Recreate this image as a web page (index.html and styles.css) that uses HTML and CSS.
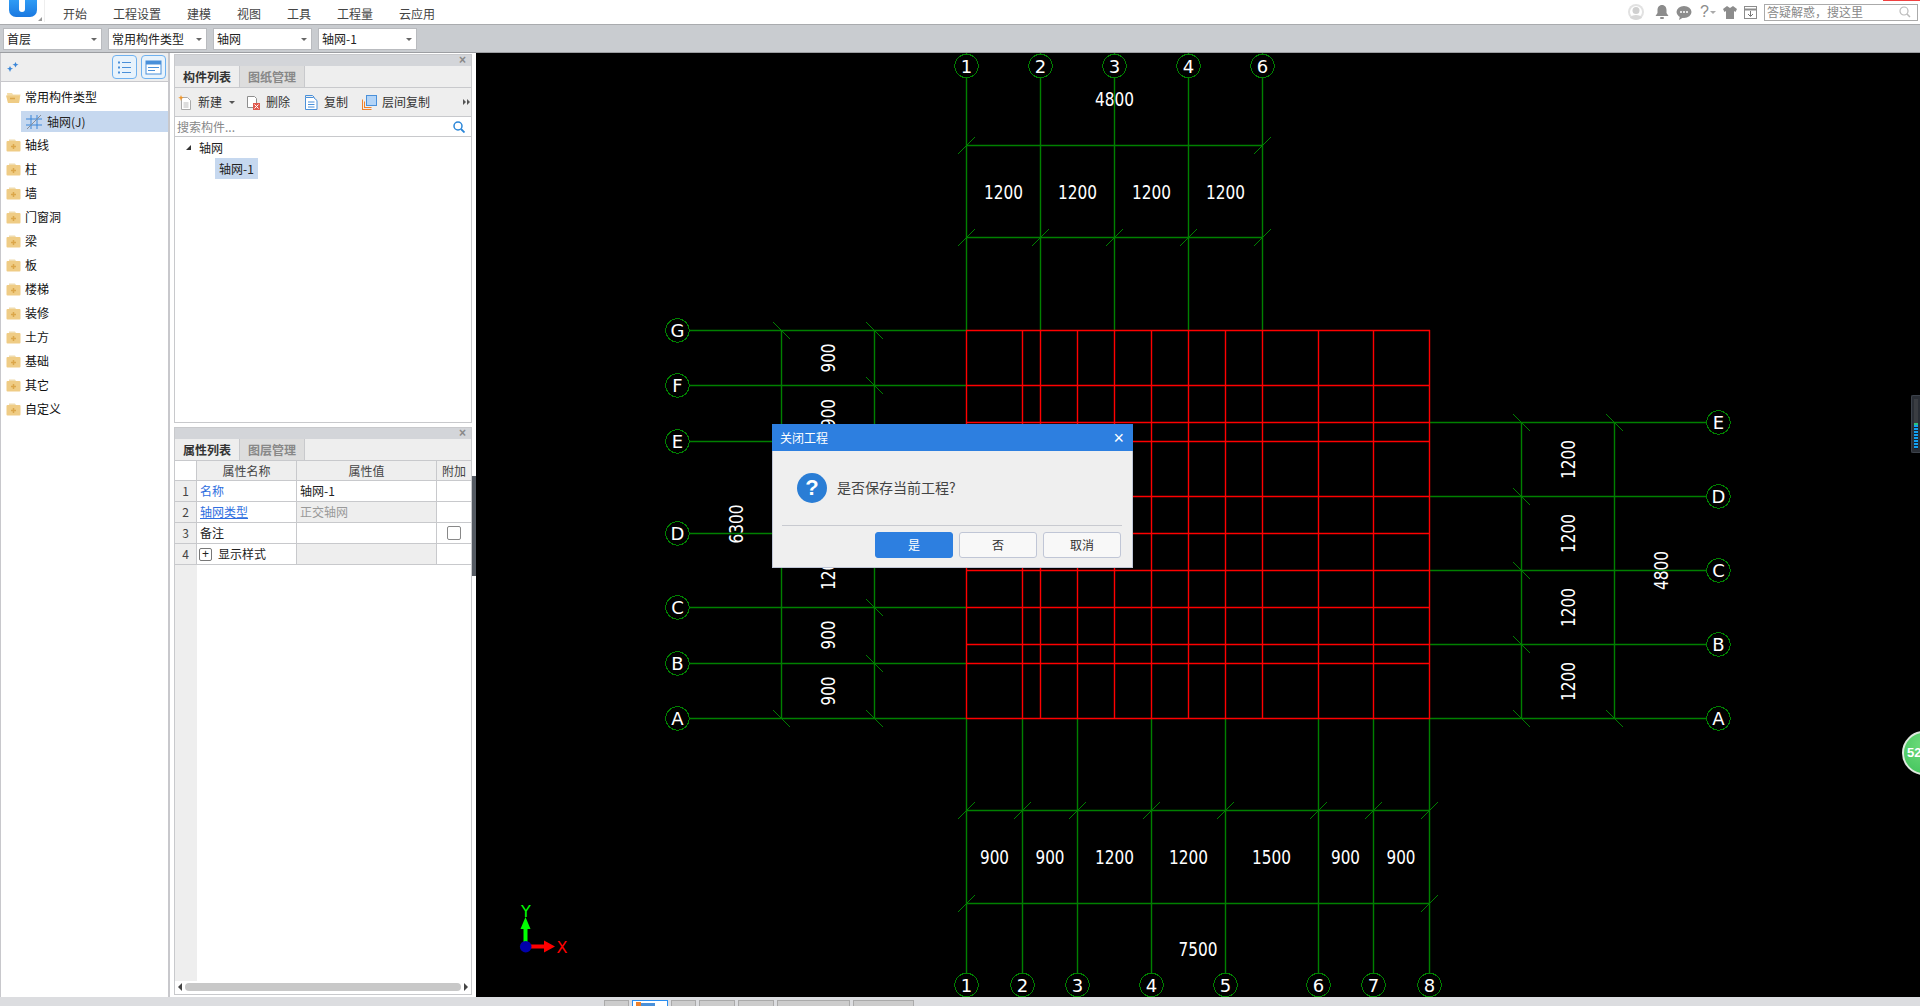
FILE: index.html
```html
<!DOCTYPE html>
<html lang="zh">
<head>
<meta charset="utf-8">
<title>关闭工程</title>
<link rel="stylesheet" href="styles.css">
</head>
<body>
<svg class="defs" width="0" height="0">
  <symbol id="folder" viewBox="0 0 15 14">
    <path d="M3 1.500h6l1 1.500H3z" fill="#f0dcae"/>
    <rect x="0.500" y="3" width="14" height="10.500" rx="1" fill="#efcc85"/>
    <path d="M7.500 6v5M5 8.500h5" stroke="#dba64a" stroke-width="1.500"/>
  </symbol>
</svg>

<header class="menubar">
  <div class="logo"><span class="logo-mark"></span></div>
  <span class="logo-corner"></span>
  <nav class="menu">
    <span>开始</span><span>工程设置</span><span>建模</span><span>视图</span><span>工具</span><span>工程量</span><span>云应用</span>
  </nav>
  <div class="top-tools">
    <svg class="ti ti-user" width="18" height="18" viewBox="0 0 18 18"><circle cx="9" cy="9" r="8" fill="#e2e2e2"/><circle cx="9" cy="9" r="6" fill="#fff"/><circle cx="9" cy="7.500" r="3.500" fill="#d0d0d0"/><path d="M3 15c1-4 11-4 12 0l-6 2z" fill="#d8d8d8"/></svg>
    <svg class="ti" width="14" height="16" viewBox="0 0 14 16"><path d="M7 1c3 0 4.500 2.500 4.500 5v3l2 3H.5l2-3V6C2.500 3.500 4 1 7 1z" fill="#8c8c8c"/><rect x="5" y="13" width="4" height="2" rx="1" fill="#8c8c8c"/></svg>
    <svg class="ti" width="16" height="15" viewBox="0 0 16 15"><ellipse cx="8" cy="7" rx="7.500" ry="6" fill="#8c8c8c"/><path d="M4 11l-1 4 5-3z" fill="#8c8c8c"/><circle cx="5" cy="7" r="1" fill="#fff"/><circle cx="8" cy="7" r="1" fill="#fff"/><circle cx="11" cy="7" r="1" fill="#fff"/></svg>
    <span class="help">?</span><span class="help-caret"></span>
    <svg class="ti" width="14" height="13" viewBox="0 0 14 13"><path d="M4 0L0 3l1.500 3L3 5v8h8V5l1.500 1L14 3l-4-3-3 2z" fill="#8c8c8c"/></svg>
    <svg class="ti" width="14" height="13" viewBox="0 0 14 13"><rect x="0.500" y="0.500" width="12" height="12" fill="none" stroke="#8c8c8c"/><path d="M0 3.500h13" stroke="#8c8c8c" stroke-width="2"/><path d="M6.500 5v5M4 8l2.500 2.500L9 8" fill="none" stroke="#777"/></svg>
    <div class="ask">
      <span>答疑解惑，搜这里</span>
      <svg width="12" height="12" viewBox="0 0 12 12"><circle cx="5" cy="5" r="4" fill="none" stroke="#bbb" stroke-width="1.200"/><path d="M8 8l3 3" stroke="#bbb" stroke-width="1.500"/></svg>
    </div>
  </div>
  <span class="red-mark"></span>
</header>

<div class="selectbar">
  <div class="select">首层</div>
  <div class="select">常用构件类型</div>
  <div class="select">轴网</div>
  <div class="select">轴网-1</div>
</div>

<main class="workspace">
  <aside class="tree-panel">
    <div class="tree-head">
      <svg width="13" height="11" viewBox="0 0 13 11"><path d="M8.500 0l1 2 2 .500-2 1-1 2-1-2-2-1 2-.500zM3 4l1 2 2 .500-2 1-1 2.500-1-2.500-2-1 2-.500z" fill="#3a86d8"/></svg>
      <span class="head-spacer"></span>
      <button class="view-btn"><svg width="15" height="15" viewBox="0 0 15 15"><path d="M5 2.500h9M5 7.500h9M5 12.500h9" stroke="#4a90d9"/><path d="M1 2.500h2M1 7.500h2M1 12.500h2" stroke="#4a90d9" stroke-width="2"/></svg></button>
      <button class="view-btn"><svg width="17" height="15" viewBox="0 0 17 15"><rect x="1" y="1" width="15" height="13" fill="#fff" stroke="#4a90d9"/><rect x="1" y="1" width="15" height="3.500" fill="#4a90d9"/><path d="M3 7.500h11M3 10.500h7" stroke="#4a90d9"/></svg></button>
    </div>
    <ul class="tree">
      <li class="t-row"><svg class="fold" width="15" height="14" viewBox="0 0 15 14"><path d="M1 3h5l1 1.500h7.500L13 13H2z" fill="#f3dca8"/><path d="M0 5.500h12l2 0-1 7.500H2z" fill="#efcc85"/><path d="M4 8.500h5" stroke="#dba64a" stroke-width="1.500"/></svg>常用构件类型</li>
      <li class="t-child"><svg class="grid-i" width="16" height="16" viewBox="0 0 16 16"><path d="M5 1v14M11 1v14M0 5h16M0 11h16" stroke="#3a86d8"/><path d="M1 15L15 1" stroke="#8a8f98"/></svg>轴网(J)</li>
      <li class="t-row"><svg class="fold" width="15" height="14"><use href="#folder"/></svg>轴线</li>
      <li class="t-row"><svg class="fold" width="15" height="14"><use href="#folder"/></svg>柱</li>
      <li class="t-row"><svg class="fold" width="15" height="14"><use href="#folder"/></svg>墙</li>
      <li class="t-row"><svg class="fold" width="15" height="14"><use href="#folder"/></svg>门窗洞</li>
      <li class="t-row"><svg class="fold" width="15" height="14"><use href="#folder"/></svg>梁</li>
      <li class="t-row"><svg class="fold" width="15" height="14"><use href="#folder"/></svg>板</li>
      <li class="t-row"><svg class="fold" width="15" height="14"><use href="#folder"/></svg>楼梯</li>
      <li class="t-row"><svg class="fold" width="15" height="14"><use href="#folder"/></svg>装修</li>
      <li class="t-row"><svg class="fold" width="15" height="14"><use href="#folder"/></svg>土方</li>
      <li class="t-row"><svg class="fold" width="15" height="14"><use href="#folder"/></svg>基础</li>
      <li class="t-row"><svg class="fold" width="15" height="14"><use href="#folder"/></svg>其它</li>
      <li class="t-row"><svg class="fold" width="15" height="14"><use href="#folder"/></svg>自定义</li>
    </ul>
  </aside>

  <div class="dock">
    <section class="panel list-panel">
      <div class="panel-head"><span class="panel-x">×</span></div>
      <div class="tabs"><span class="tab on">构件列表</span><span class="tab">图纸管理</span></div>
      <div class="actions">
        <span class="act act-new"><svg width="15" height="15" viewBox="0 0 15 15"><path d="M3.500 2.500h6l3 3v9h-9z" fill="#fff" stroke="#aaa"/><path d="M5.500 8h5M5.500 10h5M5.500 12h5" stroke="#bbb"/><path d="M3 0l.8 2 2 .8-2 .8L3 6l-.8-2.400-2-.8 2-.8z" fill="#f0962a"/></svg>新建<i class="mini-caret"></i></span>
        <span class="act act-del"><svg width="15" height="15" viewBox="0 0 15 15"><path d="M1.500 1.500h7l2 2v9h-9z" fill="#fff" stroke="#8e8e8e"/><rect x="7" y="8" width="7" height="7" fill="#e05a4e"/><path d="M8.500 9.500l4 4M12.500 9.500l-4 4" stroke="#fff"/></svg>删除</span>
        <span class="act act-copy"><svg width="13" height="15" viewBox="0 0 13 15"><path d="M.5 2.500V.5h7l2 2" fill="none" stroke="#4a90d9"/><path d="M.5 2.500h8l3.500 3v9H.5z" fill="#fff" stroke="#4a90d9"/><path d="M3 7h6.500M3 9.500h6.500M3 12h6.500" stroke="#4a90d9"/></svg>复制</span>
        <span class="act act-floor"><svg width="15" height="15" viewBox="0 0 15 15"><path d="M.5 15V4.500M.5 14.500h9" stroke="#f0812a"/><path d="M2.500 13V6.500M2.500 12.500h7" stroke="#f0812a"/><rect x="4.500" y="0.500" width="10" height="10" fill="#b3d4f7" stroke="#4a90d9"/></svg>层间复制</span>
        <span class="more"><i></i><i></i></span>
      </div>
      <div class="search">
        <span>搜索构件...</span>
        <svg width="12" height="12" viewBox="0 0 12 12"><circle cx="5" cy="5" r="4" fill="none" stroke="#2a86d8" stroke-width="1.500"/><path d="M8 8l3.500 3.500" stroke="#2a86d8" stroke-width="1.800"/></svg>
      </div>
      <div class="node"><i class="node-tri"></i>轴网</div>
      <div class="leaf">轴网-1</div>
    </section>

    <section class="panel prop-panel">
      <div class="panel-head"><span class="panel-x">×</span></div>
      <div class="tabs"><span class="tab on">属性列表</span><span class="tab">图层管理</span></div>
      <div class="prow phead"><span class="c0"></span><span class="c1">属性名称</span><span class="c2">属性值</span><span class="c3">附加</span></div>
      <div class="prow"><span class="c0">1</span><span class="c1 blue">名称</span><span class="c2">轴网-1</span><span class="c3"></span></div>
      <div class="prow"><span class="c0">2</span><span class="c1 blue under">轴网类型</span><span class="c2 off">正交轴网</span><span class="c3"></span></div>
      <div class="prow"><span class="c0">3</span><span class="c1">备注</span><span class="c2"></span><span class="c3"><i class="check"></i></span></div>
      <div class="prow"><span class="c0">4</span><span class="c1 c1-tight"><i class="plus">+</i>显示样式</span><span class="c2 fill"></span><span class="c3"></span></div>
      <div class="pfill"><span class="pgutter"></span></div>
      <div class="hscroll"><i class="arr-l"></i><span class="thumb"></span><i class="arr-r"></i></div>
    </section>
  </div>

  <div class="splitter"><span class="split-grip"></span></div>

  <div class="canvas">
    <svg class="drawing" width="1444" height="944" viewBox="476 53 1444 944">
      <path class="green" d="M689 330.500H966M689 385.500H966M689 441.500H966M689 533.500H966M689 607.500H966M689 663.500H966M689 718.500H966
        M1429 422.500H1706M1429 496.500H1706M1429 570.500H1706M1429 644.500H1706M1429 718.500H1706
        M966.500 78V330M1040.500 78V330M1114.500 78V330M1188.500 78V330M1262.500 78V330
        M966.500 53V55M1040.500 53V55M1114.500 53V55M1188.500 53V55M1262.500 53V55
        M966.500 719V973M1022.500 719V973M1077.500 719V973M1151.500 719V973M1225.500 719V973M1318.500 719V973M1373.500 719V973M1429.500 719V973
        M966.500 995V997M1022.500 995V997M1077.500 995V997M1151.500 995V997M1225.500 995V997M1318.500 995V997M1373.500 995V997M1429.500 995V997
        M966.500 145.500H1262.500M966.500 237.500H1262.500M966.500 810.500H1429.500M966.500 903.500H1429.500
        M781.500 330.500V718.500M874.500 330.500V718.500M1521.500 422.500V718.500M1614.500 422.500V718.500"/>
      <path class="tick" d="M958 154l17-17M1254 154l17-17
        M958 246l17-17M1032 246l17-17M1106 246l17-17M1180 246l17-17M1254 246l17-17
        M958 819l17-17M1014 819l17-17M1069 819l17-17M1143 819l17-17M1217 819l17-17M1310 819l17-17M1365 819l17-17M1421 819l17-17
        M958 912l17-17M1421 912l17-17
        M773 322l17 17M773 710l17 17
        M866 322l17 17M866 377l17 17M866 433l17 17M866 525l17 17M866 599l17 17M866 655l17 17M866 710l17 17
        M1513 414l17 17M1513 488l17 17M1513 562l17 17M1513 636l17 17M1513 710l17 17
        M1606 414l17 17M1606 710l17 17"/>
      <path class="red" d="M966 330.500H1430M966 385.500H1430M966 422.500H1430M966 441.500H1430M966 496.500H1430M966 533.500H1430M966 570.500H1430M966 607.500H1430M966 644.500H1430M966 663.500H1430M966 718.500H1430
        M966.500 330V719M1022.500 330V719M1040.500 330V719M1077.500 330V719M1114.500 330V719M1151.500 330V719M1188.500 330V719M1225.500 330V719M1262.500 330V719M1318.500 330V719M1373.500 330V719M1429.500 330V719"/>
      <g class="bubbles">
        <circle cx="966.500" cy="66" r="11.700"/><circle cx="1040.500" cy="66" r="11.700"/><circle cx="1114.500" cy="66" r="11.700"/><circle cx="1188.500" cy="66" r="11.700"/><circle cx="1262.500" cy="66" r="11.700"/>
        <circle cx="966.500" cy="985" r="11.700"/><circle cx="1022.500" cy="985" r="11.700"/><circle cx="1077.500" cy="985" r="11.700"/><circle cx="1151.500" cy="985" r="11.700"/><circle cx="1225.500" cy="985" r="11.700"/><circle cx="1318.500" cy="985" r="11.700"/><circle cx="1373.500" cy="985" r="11.700"/><circle cx="1429.500" cy="985" r="11.700"/>
        <circle cx="677.500" cy="330.500" r="11.700"/><circle cx="677.500" cy="385.500" r="11.700"/><circle cx="677.500" cy="441.500" r="11.700"/><circle cx="677.500" cy="533.500" r="11.700"/><circle cx="677.500" cy="607.500" r="11.700"/><circle cx="677.500" cy="663.500" r="11.700"/><circle cx="677.500" cy="718.500" r="11.700"/>
        <circle cx="1718.500" cy="422.500" r="11.700"/><circle cx="1718.500" cy="496.500" r="11.700"/><circle cx="1718.500" cy="570.500" r="11.700"/><circle cx="1718.500" cy="644.500" r="11.700"/><circle cx="1718.500" cy="718.500" r="11.700"/>
      </g>
      <g class="ax">
        <text x="966.500" y="73">1</text><text x="1040.500" y="73">2</text><text x="1114.500" y="73">3</text><text x="1188.500" y="73">4</text><text x="1262.500" y="73">6</text>
        <text x="966.500" y="992">1</text><text x="1022.500" y="992">2</text><text x="1077.500" y="992">3</text><text x="1151.500" y="992">4</text><text x="1225.500" y="992">5</text><text x="1318.500" y="992">6</text><text x="1373.500" y="992">7</text><text x="1429.500" y="992">8</text>
        <text x="677.500" y="337">G</text><text x="677.500" y="392">F</text><text x="677.500" y="448">E</text><text x="677.500" y="540">D</text><text x="677.500" y="614">C</text><text x="677.500" y="670">B</text><text x="677.500" y="725">A</text>
        <text x="1718.500" y="429">E</text><text x="1718.500" y="503">D</text><text x="1718.500" y="577">C</text><text x="1718.500" y="651">B</text><text x="1718.500" y="725">A</text>
      </g>
      <g class="dim">
        <text x="1114.500" y="106" textLength="39" lengthAdjust="spacingAndGlyphs">4800</text>
        <text x="1003.500" y="199" textLength="39" lengthAdjust="spacingAndGlyphs">1200</text>
        <text x="1077.500" y="199" textLength="39" lengthAdjust="spacingAndGlyphs">1200</text>
        <text x="1151.500" y="199" textLength="39" lengthAdjust="spacingAndGlyphs">1200</text>
        <text x="1225.500" y="199" textLength="39" lengthAdjust="spacingAndGlyphs">1200</text>
        <text x="994.500" y="864" textLength="29" lengthAdjust="spacingAndGlyphs">900</text>
        <text x="1050" y="864" textLength="29" lengthAdjust="spacingAndGlyphs">900</text>
        <text x="1114.500" y="864" textLength="39" lengthAdjust="spacingAndGlyphs">1200</text>
        <text x="1188.500" y="864" textLength="39" lengthAdjust="spacingAndGlyphs">1200</text>
        <text x="1271.500" y="864" textLength="39" lengthAdjust="spacingAndGlyphs">1500</text>
        <text x="1345.500" y="864" textLength="29" lengthAdjust="spacingAndGlyphs">900</text>
        <text x="1401" y="864" textLength="29" lengthAdjust="spacingAndGlyphs">900</text>
        <text x="1198" y="956" textLength="39" lengthAdjust="spacingAndGlyphs">7500</text>
        <text x="828" y="365" transform="rotate(-90 828 358)" textLength="29" lengthAdjust="spacingAndGlyphs">900</text>
        <text x="828" y="420.500" transform="rotate(-90 828 413.500)" textLength="29" lengthAdjust="spacingAndGlyphs">900</text>
        <text x="828" y="577.500" transform="rotate(-90 828 570.500)" textLength="39" lengthAdjust="spacingAndGlyphs">1200</text>
        <text x="828" y="642" transform="rotate(-90 828 635)" textLength="29" lengthAdjust="spacingAndGlyphs">900</text>
        <text x="828" y="698" transform="rotate(-90 828 691)" textLength="29" lengthAdjust="spacingAndGlyphs">900</text>
        <text x="735.500" y="531" transform="rotate(-90 735.500 524)" textLength="39" lengthAdjust="spacingAndGlyphs">6300</text>
        <text x="1567.500" y="466.500" transform="rotate(-90 1567.500 459.500)" textLength="39" lengthAdjust="spacingAndGlyphs">1200</text>
        <text x="1567.500" y="540.500" transform="rotate(-90 1567.500 533.500)" textLength="39" lengthAdjust="spacingAndGlyphs">1200</text>
        <text x="1567.500" y="614.500" transform="rotate(-90 1567.500 607.500)" textLength="39" lengthAdjust="spacingAndGlyphs">1200</text>
        <text x="1567.500" y="688.500" transform="rotate(-90 1567.500 681.500)" textLength="39" lengthAdjust="spacingAndGlyphs">1200</text>
        <text x="1660.500" y="577.500" transform="rotate(-90 1660.500 570.500)" textLength="39" lengthAdjust="spacingAndGlyphs">4800</text>
      </g>
      <g class="triad">
        <path d="M523.500 945V929h-3l5-12 5 12h-3v16z" fill="#00ff00"/>
        <path d="M530 944.500h14v-4l11 6-11 6v-4h-14z" fill="#ff0000"/>
        <circle cx="525.700" cy="946.700" r="5.800" fill="#0000aa"/>
        <text class="tx-y" x="526" y="917">Y</text>
        <text class="tx-x" x="562" y="953">X</text>
      </g>
    </svg>
  </div>
</main>

<footer class="statusbar">
  <span class="st st-a"></span><span class="st st-b"></span><span class="st st-a"></span><span class="st st-c"></span><span class="st st-c"></span><span class="st st-d"></span><span class="st st-e"></span>
</footer>

<div class="dialog">
  <div class="dlg-title"><span>关闭工程</span><span class="dlg-x">×</span></div>
  <div class="dlg-body">
    <span class="dlg-q">?</span>
    <span class="dlg-msg">是否保存当前工程?</span>
  </div>
  <div class="dlg-sep"></div>
  <div class="dlg-btns">
    <button class="btn primary">是</button>
    <button class="btn">否</button>
    <button class="btn">取消</button>
  </div>
</div>

<div class="meter"><span class="meter-off"></span><span class="meter-green"></span><span class="meter-on"></span></div>
<div class="ball">52</div>
</body>
</html>
```

FILE: styles.css
```css
* { box-sizing: border-box; }
html, body { margin: 0; padding: 0; }
body {
  width: 1920px;
  height: 1006px;
  overflow: hidden;
  display: flex;
  flex-direction: column;
  position: relative;
  font: 12px/1 "Noto Sans CJK SC", "Liberation Sans", sans-serif;
  color: #222;
  background: #fff;
}
.defs { position: absolute; }
ul { list-style: none; margin: 0; padding: 0; }
i { font-style: normal; }
button { font: inherit; padding: 0; }

/* top menu */
.menubar {
  height: 25px;
  flex: none;
  display: flex;
  align-items: center;
  background: #fff;
  border-bottom: 1px solid #a9abae;
  position: relative;
}
.logo {
  width: 28px;
  height: 17px;
  margin-left: 9px;
  align-self: flex-start;
  background: linear-gradient(#2f9cf5, #1a78e0);
  border-radius: 0 0 7px 7px;
  display: flex;
  justify-content: center;
}
.logo-mark { width: 6px; height: 12px; margin-right: 2px; background: #fff; border-radius: 0 0 3px 3px; }
.logo-corner {
  align-self: flex-start;
  width: 8px;
  height: 22px;
  margin-right: 18px;
  border-right: 1px solid #eee;
  position: relative;
}
.logo-corner::after {
  content: "";
  position: absolute;
  left: 1px;
  top: 17px;
  border-left: 4px solid transparent;
  border-bottom: 4px solid #999;
}
.menu { display: flex; gap: 26px; color: #444; margin-top: 3px; }
.top-tools { margin-left: auto; margin-right: 2px; display: flex; align-items: center; gap: 7px; }
.ti { flex: none; }
.ti-user { margin-right: 3px; }
.help { font: 16px "Liberation Sans", sans-serif; color: #8c8c8c; margin-left: 1px; }
.help-caret { border: 3px solid transparent; border-top-color: #aaa; margin: 3px 0 0 -6px; }
.ask {
  width: 154px;
  height: 17px;
  border: 1px solid #aaa;
  display: flex;
  align-items: center;
  justify-content: space-between;
  padding: 0 6px 0 2px;
  color: #888;
  margin-left: -1px;
}
.red-mark { position: absolute; right: 0; top: 0; width: 37px; height: 1px; background: #f04040; }

/* select bar */
.selectbar {
  height: 28px;
  flex: none;
  display: flex;
  gap: 6px;
  padding: 3px 0 0 3px;
  background: #c9ccd0;
  border-bottom: 1px solid #9c9ea2;
}
.select {
  width: 99px;
  height: 22px;
  background: #fff;
  border: 1px solid #b9bbbf;
  padding-left: 3px;
  display: flex;
  align-items: center;
  justify-content: space-between;
  color: #222;
}
.select::after {
  content: "";
  border: 3px solid transparent;
  border-top: 3px solid #666;
  border-bottom: 0;
  margin-right: 4px;
}

/* workspace */
.workspace { flex: 1; display: flex; min-height: 0; background: #fff; }
.tree-panel {
  width: 170px;
  flex: none;
  border-left: 1px solid #c8c8cc;
  border-right: 2px solid #c8c8cc;
  display: flex;
  flex-direction: column;
}
.tree-head {
  height: 29px;
  flex: none;
  background: #eee;
  border-bottom: 1px solid #c8c8cc;
  display: flex;
  align-items: center;
  padding: 0 2px 0 6px;
  gap: 4px;
}
.head-spacer { flex: 1; }
.view-btn {
  width: 25px;
  height: 24px;
  background: #e8f3fc;
  border: 1px solid #6fb1ef;
  border-radius: 4px;
  display: flex;
  align-items: center;
  justify-content: center;
}
.tree { padding-top: 3px; }
.t-row { height: 24px; display: flex; align-items: center; gap: 4px; padding-left: 5px; color: #111; }
.t-child {
  height: 21px;
  margin: 2px 0 1px 20px;
  background: #c6d8ef;
  display: flex;
  align-items: center;
  gap: 5px;
  padding-left: 5px;
}
.fold { flex: none; }
.grid-i { flex: none; }

.dock { width: 298px; margin-left: 4px; flex: none; display: flex; flex-direction: column; gap: 4px; padding: 1px 0 2px; }
.panel { border: 1px solid #c8c9cc; background: #fff; display: flex; flex-direction: column; }
.list-panel { height: 369px; flex: none; }
.prop-panel { flex: 1; min-height: 0; }
.panel-head {
  height: 11px;
  flex: none;
  background: #d3d5d9;
  display: flex;
  align-items: center;
  justify-content: flex-end;
  padding-right: 5px;
}
.panel-x { font: bold 12px/11px "Liberation Sans", sans-serif; color: #888; }
.tabs { height: 22px; flex: none; display: flex; background: #eee; border-bottom: 1px solid #c8c9cc; }
.tab {
  width: 65px;
  display: flex;
  align-items: center;
  justify-content: center;
  color: #888;
  font-weight: 700;
  background: #ddd;
  border-right: 1px solid #c8c9cc;
}
.tab.on { background: #eee; color: #333; }
.actions {
  height: 29px;
  flex: none;
  background: #eee;
  border-bottom: 1px solid #c8c9cc;
  display: flex;
  align-items: center;
  color: #333;
  padding-left: 3px;
}
.act { display: flex; align-items: center; gap: 5px; flex: none; }
.act-new { width: 68px; }
.act-del { width: 59px; }
.act-copy { width: 57px; gap: 6px; }
.act-floor { width: 101px; }
.mini-caret { border: 3px solid transparent; border-top-color: #555; border-bottom: 0; margin-left: 2px; }
.more { display: flex; gap: 1px; flex: none; }
.more i { border: 3px solid transparent; border-left: 3px solid #555; border-right: 0; }
.search {
  height: 19px;
  flex: none;
  margin-top: 1px;
  border-bottom: 1px solid #c8c9cc;
  display: flex;
  align-items: center;
  justify-content: space-between;
  padding: 0 6px 0 2px;
  color: #888;
}
.node { height: 21px; display: flex; align-items: center; padding-left: 11px; gap: 8px; margin-top: 0; }
.node-tri { width: 0; height: 0; border-left: 5px solid transparent; border-bottom: 5px solid #333; }
.leaf { width: 43px; height: 21px; margin-left: 40px; background: #c6d8ef; display: flex; align-items: center; justify-content: center; }

.prow { display: grid; grid-template-columns: 22px 100px 140px 1fr; height: 21px; flex: none; border-bottom: 1px solid #c8c9cc; }
.prow > span { display: flex; align-items: center; border-right: 1px solid #c8c9cc; padding-left: 3px; min-width: 0; }
.prow > span:last-child { border-right: 0; }
.prow .c0 { background: #eee; justify-content: center; padding: 0; color: #444; font-size: 12px; }
.phead { height: 20px; }
.phead span { background: #eee; justify-content: center; color: #444; padding: 0; }
.phead .c0 { background: #fff; }
.phead .c3 { white-space: nowrap; }
.blue { color: #2f6fe0; }
.under { text-decoration: underline; text-decoration-thickness: 1px; text-decoration-color: #2f6fe0; }
.prow .off { background: #eee; color: #999; }
.prow .fill { background: #eee; }
.prow .c3 { justify-content: center; padding: 0; }
.prow .c1-tight { padding-left: 2px; }
.check { width: 14px; height: 14px; border: 1px solid #888; border-radius: 2px; background: #fff; }
.plus {
  width: 13px;
  height: 13px;
  border: 1px solid #777;
  border-radius: 2px;
  display: flex;
  align-items: center;
  justify-content: center;
  font: 12px/1 "Liberation Sans", sans-serif;
  margin-right: 6px;
}
.pfill { flex: 1; min-height: 0; display: flex; }
.pgutter { width: 22px; background: #eee; }
.hscroll { height: 13px; flex: none; display: flex; align-items: center; padding: 0 3px 2px; gap: 3px; }
.thumb { flex: 1; height: 8px; border-radius: 4px; background: #c8c8c8; }
.arr-l { border: 4px solid transparent; border-right: 4px solid #444; border-left: 0; }
.arr-r { border: 4px solid transparent; border-left: 4px solid #444; border-right: 0; }

.splitter { width: 4px; flex: none; background: #fff; position: relative; }
.split-grip { position: absolute; left: 0; top: 423px; width: 4px; height: 100px; background: #555b63; }

.canvas { flex: 1; min-width: 0; background: #000; overflow: hidden; }
.drawing { display: block; }
.green { fill: none; stroke: #008000; stroke-width: 1.4; }
.tick { fill: none; stroke: #008000; stroke-width: 1; shape-rendering: crispEdges; }
.red { fill: none; stroke: #ff0000; stroke-width: 1.4; }
.bubbles { shape-rendering: crispEdges; }
.bubbles circle { fill: #000; stroke: #008000; stroke-width: 1; }
.ax text { font: 18px "DejaVu Sans", sans-serif; fill: #fff; text-anchor: middle; }
.dim text { font: 400 19px "DejaVu Sans", sans-serif; fill: #fff; text-anchor: middle; }
.tx-y { font: 16px "DejaVu Sans", sans-serif; fill: #00ff00; text-anchor: middle; }
.tx-x { font: 16px "DejaVu Sans", sans-serif; fill: #ff0000; text-anchor: middle; }

.statusbar {
  height: 9px;
  flex: none;
  background: #dcdde0;
  display: flex;
  gap: 3px;
  padding: 3px 0 0 604px;
  overflow: hidden;
}
.st { height: 12px; background: #ccc; border: 1px solid #aaa; flex: none; }
.st-a { width: 25px; }
.st-b {
  width: 36px;
  border-color: #2a8ef0;
  background:
    linear-gradient(#f0812a, #f0812a) 3px 1px / 5px 5px no-repeat,
    linear-gradient(#4a90d9, #4a90d9) 8px 2px / 14px 4px no-repeat,
    #fff;
}
.st-c { width: 36px; }
.st-d { width: 73px; }
.st-e { width: 61px; }

/* dialog */
.dialog {
  position: absolute;
  left: 772px;
  top: 424px;
  width: 361px;
  height: 144px;
  background: #efefef;
  border: 1px solid #c0c6d6;
  border-top: 0;
  display: flex;
  flex-direction: column;
}
.dlg-title {
  height: 27px;
  flex: none;
  margin: 0 -1px;
  background: #2d7fe0;
  color: #fff;
  display: flex;
  align-items: center;
  justify-content: space-between;
  padding: 0 9px 0 8px;
}
.dlg-x { font: 18px/1 "Liberation Sans", sans-serif; }
.dlg-body { height: 74px; flex: none; display: flex; align-items: center; padding: 0 0 0 24px; gap: 10px; }
.dlg-q {
  width: 30px;
  height: 30px;
  border-radius: 50%;
  background: #2a7dd5;
  color: #fff;
  font: bold 22px/30px "Liberation Sans", sans-serif;
  text-align: center;
  flex: none;
}
.dlg-msg { font-size: 14px; color: #444; margin-top: -2px; }
.dlg-sep { height: 1px; flex: none; margin: 0 10px 0 9px; background: #c8cad0; }
.dlg-btns { display: flex; justify-content: flex-end; gap: 6px; padding: 6px 11px 0 0; }
.btn {
  width: 78px;
  height: 26px;
  background: #f8f8f8;
  border: 1px solid #c0c6d6;
  border-radius: 3px;
  color: #333;
}
.btn.primary { background: #2d7fe0; border-color: #2d7fe0; color: #fff; }

/* floating widgets */
.meter {
  position: absolute;
  right: 0;
  top: 395px;
  width: 9px;
  height: 58px;
  background: #2a2e35;
  border: 1px solid #3c424b;
  border-right: 0;
  border-radius: 2px 0 0 2px;
  padding: 3px 2px;
  display: flex;
  flex-direction: column;
}
.meter-off { height: 24px; background: #3a3d42; }
.meter-green { height: 2px; background: #2ec27e; }
.meter-on { flex: 1; background: repeating-linear-gradient(#14a0f0 0 2px, #123 2px 3px); }
.ball {
  position: absolute;
  left: 1902px;
  top: 731px;
  width: 44px;
  height: 44px;
  border-radius: 50%;
  background: radial-gradient(circle at 50% 30%, #6fdc7c, #3fc25a);
  border: 2px solid #dfe8df;
  color: #fff;
  font: bold 13px/40px "Liberation Sans", sans-serif;
  padding-left: 3px;
}
```
